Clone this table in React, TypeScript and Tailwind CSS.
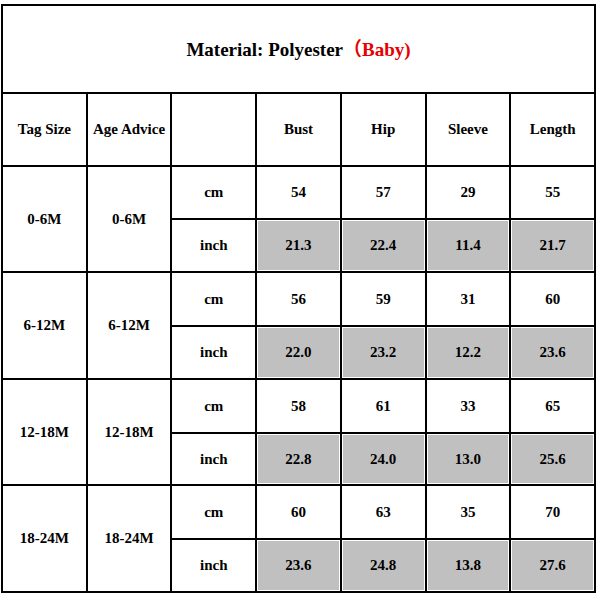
const rows = [
  { tag: "0-6M", cm: ["54", "57", "29", "55"], inch: ["21.3", "22.4", "11.4", "21.7"] },
  { tag: "6-12M", cm: ["56", "59", "31", "60"], inch: ["22.0", "23.2", "12.2", "23.6"] },
  { tag: "12-18M", cm: ["58", "61", "33", "65"], inch: ["22.8", "24.0", "13.0", "25.6"] },
  { tag: "18-24M", cm: ["60", "63", "35", "70"], inch: ["23.6", "24.8", "13.8", "27.6"] },
];

const headers = ["Tag Size", "Age Advice", "", "Bust", "Hip", "Sleeve", "Length"];

function Cell({ children, grey, className = "" }: { children?: React.ReactNode; grey?: boolean; className?: string }) {
  return (
    <div
      className={`flex items-center justify-center ${
        grey ? "bg-[#c0c0c0] shadow-[inset_0_0_0_1px_#ffffff]" : "bg-white"
      } ${className}`}
    >
      {children}
    </div>
  );
}

export default function App() {
  return (
    <div className="h-[600px] w-[600px] bg-white pl-[1px] pt-[4px] font-['Liberation_Serif','Noto_Sans_CJK_SC',serif]">
      <div className="grid w-[595px] grid-cols-7 grid-rows-[86px_71px_51px_51px_52px_51px_52px_50px_52px_51px] gap-[2px] bg-black p-[2px] text-[15px] font-bold text-black">
        <Cell className="col-span-7 pt-[2px] text-[19px]">
          <span>Material: Polyester</span>
          <span className="text-[#e60000]">（Baby)</span>
        </Cell>
        {headers.map((h, i) => (
          <Cell key={i}>{h}</Cell>
        ))}
        {rows.map((r) => (
          <>
            <Cell key={r.tag + "t"} className="row-span-2">{r.tag}</Cell>
            <Cell key={r.tag + "a"} className="row-span-2">{r.tag}</Cell>
            <Cell key={r.tag + "c"}>cm</Cell>
            {r.cm.map((v, i) => (
              <Cell key={r.tag + "cm" + i}>{v}</Cell>
            ))}
            <Cell key={r.tag + "i"}>inch</Cell>
            {r.inch.map((v, i) => (
              <Cell key={r.tag + "in" + i} grey>
                {v}
              </Cell>
            ))}
          </>
        ))}
      </div>
    </div>
  );
}
